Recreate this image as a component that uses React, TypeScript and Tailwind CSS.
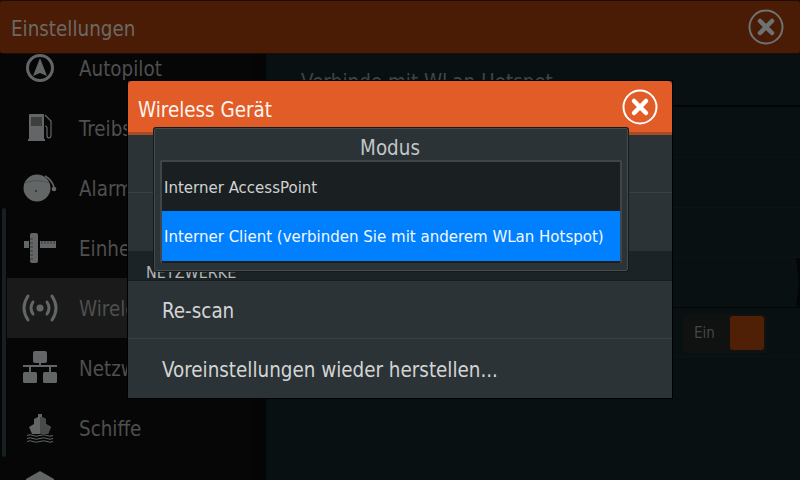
import React from "react";

const G = "#636666";
const Autopilot = () => (
  <svg width="30" height="30" viewBox="0 0 30 30">
    <circle cx="15" cy="15" r="12.500" fill="none" stroke={G} strokeWidth="3" />
    <path d="M15 5 L22 23 L15 20 L8 23 Z" fill={G} />
  </svg>
);
const Fuel = () => (
  <svg width="30" height="30" viewBox="0 0 30 30">
    <path d="M4 2 Q4 1 5 1 H18 Q19 1 19 2 V26 H20 V28 H3 V26 H4 Z" fill={G} />
    <rect x="6" y="4" width="11" height="9" fill="#3d3f3f" />
    <path d="M20 2 L26 8 V22 Q26 25 24 25 Q22 25 22 22 V15 Q22 13 20 13" fill="none" stroke={G} strokeWidth="1.200" />
  </svg>
);
const Bell = () => (
  <svg width="34" height="30" viewBox="0 0 34 30">
    <circle cx="14" cy="15" r="13.500" fill={G} />
    <path d="M2 10 Q14 5 26 10" fill="none" stroke="#4a4c4c" strokeWidth="0.8" />
    <circle cx="13" cy="18" r="1" fill="#2a2a2a" />
    <path d="M22 3 Q29 7 31 14" fill="none" stroke={G} strokeWidth="1.500" />
    <circle cx="31" cy="16" r="2.300" fill={G} />
  </svg>
);
const Units = () => (
  <svg width="34" height="34" viewBox="0 0 34 34">
    <rect x="7" y="2" width="8" height="30" rx="2" fill={G} />
    <rect x="1" y="10" width="5" height="7" fill={G} />
    <rect x="17" y="10" width="16" height="7" fill={G} />
    <path d="M19 10 V13 M22 10 V13 M25 10 V13 M28 10 V13 M31 10 V13 M7 8 H10 M7 12 H10 M7 16 H10 M7 20 H10 M7 24 H10 M7 28 H10" stroke="#2f3131" strokeWidth="0.8" />
  </svg>
);
const Wifi = () => (
  <svg width="38" height="30" viewBox="0 0 38 30" fill="none" stroke={G} strokeWidth="3" strokeLinecap="round">
    <circle cx="19" cy="15" r="3.500" fill={G} stroke="none" />
    <path d="M12 9 Q8 15 12 21 M26 9 Q30 15 26 21" />
    <path d="M7 3 Q-1 15 7 27 M31 3 Q39 15 31 27" />
  </svg>
);
const Net = () => (
  <svg width="36" height="34" viewBox="0 0 36 34" fill={G}>
    <rect x="11" y="0" width="14" height="12" rx="2" />
    <rect x="17" y="12" width="2" height="4" />
    <rect x="1" y="14" width="34" height="2" />
    <rect x="1" y="21" width="14" height="11" rx="1.500" />
    <rect x="21" y="21" width="14" height="11" rx="1.500" />
    <rect x="7" y="15" width="2" height="6" />
    <rect x="27" y="15" width="2" height="6" />
  </svg>
);
const Ship = () => (
  <svg width="28" height="30" viewBox="0 0 28 30" fill={G}>
    <path d="M12 1 H16 V4 L20 6 V11 L25 14 L22 21 H6 L3 14 L8 11 V6 L12 4 Z" />
    <path d="M14 4 H16 L20 6 V11 L25 14 L22 21 H14 Z" fill="#484a4a" />
    <path d="M1 22.500 Q4 21 7 22.500 T14 22.500 T21 22.500 T27 22.500 M1 25.500 Q4 24 7 25.500 T14 25.500 T21 25.500 T27 25.500 M1 28.500 Q4 27 7 28.500 T14 28.500 T21 28.500 T27 28.500" fill="none" stroke={G} strokeWidth="1" />
  </svg>
);
const CloseX = ({ color }: { color: string }) => (
  <svg width="36" height="36" viewBox="0 0 36 36">
    <circle cx="18" cy="18" r="16.500" fill="none" stroke={color} strokeWidth="2" />
    <path d="M12 12 L24 24 M24 12 L12 24" stroke={color} strokeWidth="4.500" strokeLinecap="round" />
  </svg>
);

const items: [string, React.ReactNode, boolean][] = [
  ["Autopilot", <Autopilot />, false],
  ["Treibstoff", <Fuel />, false],
  ["Alarme", <Bell />, false],
  ["Einheiten", <Units />, false],
  ["Wireless", <Wifi />, true],
  ["Netzwerk", <Net />, false],
  ["Schiffe", <Ship />, false],
];

export default function App() {
  return (
    <div className="relative flex flex-col w-[800px] h-[480px] overflow-hidden bg-[#081012] text-[20.4px] font-stretch-condensed font-['DejaVu_Sans',sans-serif]">
      <header className="relative z-10 flex flex-none items-center justify-between h-[54px] pl-[11px] pr-[16px] rounded-[3px] bg-[#4a1c05] border-t border-b border-[#1f0d03] text-[#6b6a66]">
        <span className="pt-[5px]">Einstellungen</span>
        <CloseX color="#6e7270" />
      </header>

      <div className="flex flex-1 -mt-4 min-h-0">
        <div className="flex flex-none w-[266px] bg-[#050506]">
          <div className="flex-none w-[7px] pt-[170px]">
            <div className="ml-[2px] w-[4px] h-[249px] rounded-sm bg-[#162022]" />
          </div>
          <nav className="flex-none w-[245px] bg-[#060606]">
            {items.map(([label, icon, active]) => (
              <div key={label} className={`flex items-center h-[60px] ${active ? "bg-[#1a1a1a]" : ""}`}>
                <div className="flex items-center justify-center flex-none w-[66px]">{icon}</div>
                <span className="pl-[6px] pt-[2px] text-[#4e4f4f]">{label}</span>
              </div>
            ))}
            <div className="flex justify-center w-[66px] pt-[13px]">
              <svg width="28" height="10" viewBox="0 0 28 10"><path d="M14 0 L28 8 V10 H0 V8 Z" fill={G} /></svg>
            </div>
          </nav>
        </div>
        <main className="flex-1 min-w-0 text-[#3f4546]">
          <div className="h-[67px] pt-[29px] pl-[35px] whitespace-nowrap">Verbinde mit WLan Hotspot</div>
          <div className="h-[52px] border-t-2 border-[#030506]" />
          <div className="h-[50px] border-t border-[#0d1315]" />
          <div className="h-[50px] border-t border-[#0d1315]" />
          <div className="flex justify-end h-[50px] border-t border-[#0d1315]">
            <svg width="6" height="48" viewBox="0 0 6 48" className="flex-none"><path d="M2 0 L5 24 L2 48 H6 V0 Z" fill="#030506" /></svg>
          </div>
          <div className="flex items-center justify-end h-[50px] pt-[2px] pr-[33px] border-t border-[#030506] border-b-[#0d1315] border-b">
            <div className="flex items-center h-[39px] w-[84px] rounded-sm bg-[#101111] pl-[11px]">
              <span className="text-[15px] text-[#454646]">Ein</span>
              <div className="ml-[15px] w-[34px] h-[34px] rounded-[3px] bg-[#4f2006]" />
            </div>
          </div>
        </main>
      </div>

      <section className="absolute z-20 left-[128px] top-[81px] flex flex-col w-[544px] h-[317px] bg-[#2b3336] text-[#d3d5d5] shadow-[0_0_0_1px_#000]">
        <div className="flex flex-none items-center justify-between h-[54px] pl-[10px] pr-[14px] rounded-t-[4px] bg-[#e25c27] border-b-[3px] border-[#a84a24] text-[#fdf4ee]">
          <span className="pt-[7px]">Wireless Gerät</span>
          <CloseX color="#ffffff" />
        </div>
        <div className="h-[58px] flex-none border-b border-[#3a4245]" />
        <div className="h-[58px] flex-none" />
        <div className="flex flex-none items-end h-[30px] pl-[18px] bg-[#1c2326] border-b border-[#171c1e] text-[16px] leading-[15px] text-[#b4b7b7]">
          NETZWERKE
        </div>
        <div className="flex flex-none items-center h-[58px] pl-[34px] pt-[4px] border-b border-[#384043]">Re-scan</div>
        <div className="flex flex-1 items-center pl-[34px] pt-[4px] whitespace-nowrap">Voreinstellungen wieder herstellen...</div>

        <div className="absolute left-[26px] top-[47px] flex flex-col w-[474px] h-[143px] rounded-[2px] bg-[#2b3336] border border-[#444b4e] shadow-[0_0_0_1px_#14191b]">
          <div className="flex flex-none items-center justify-center h-[31px] pt-[8px] pr-[2px] text-[#c4c6c6]">Modus</div>
          <div className="flex flex-col mx-[5px] h-[103px] rounded-[2px] border-2 border-[#3f4649] border-b-0 bg-[#1a1f21] text-[16.700px]">
            <div className="flex flex-none items-center h-[49px] pl-[2px] pt-[2px] text-[#d0d2d2]">Interner AccessPoint</div>
            <div className="flex flex-none items-center h-[50px] pl-[2px] pt-[2px] bg-[#0080ff] text-[#f2f8ff] whitespace-nowrap">
              Interner Client (verbinden Sie mit anderem WLan Hotspot)
            </div>
          </div>
        </div>
      </section>
    </div>
  );
}
